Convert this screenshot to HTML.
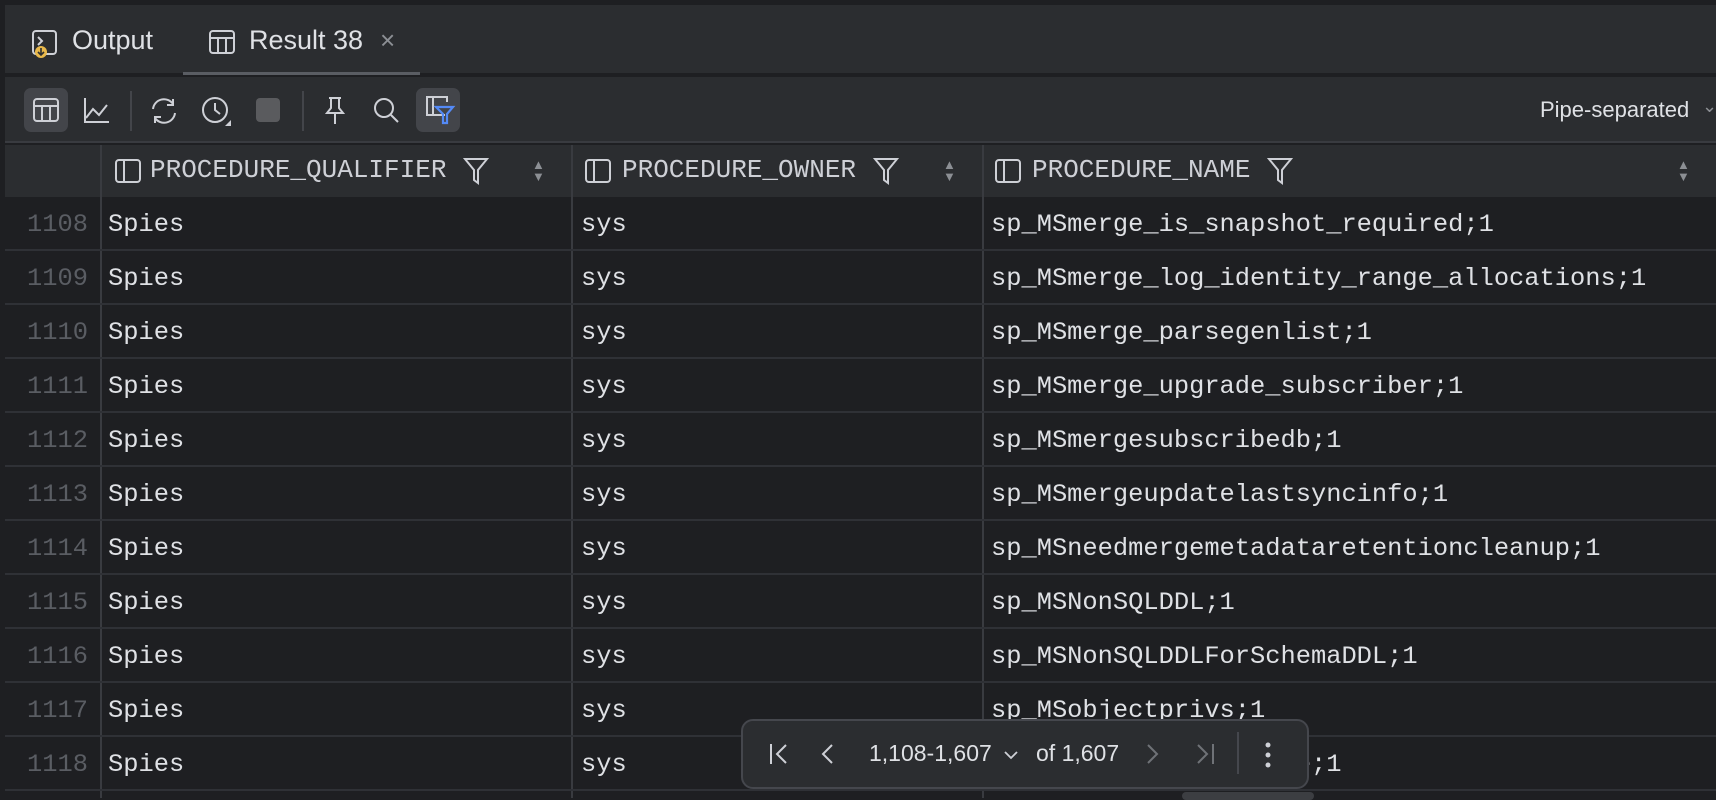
<!DOCTYPE html>
<html><head><meta charset="utf-8"><style>
*{margin:0;padding:0;box-sizing:border-box}
body{width:1716px;height:798px;overflow:hidden;background:#1e1f22;position:relative;font-family:"Liberation Sans",sans-serif;color:#dfe1e5}
.abs{position:absolute}
.mono{font-family:"Liberation Mono",monospace;font-size:25.4px}
.hm{font-family:"Liberation Mono",monospace;font-size:26px}
.row{position:absolute;left:5px;right:0;height:54px;border-bottom:2px solid #2f3136}
.num{position:absolute;left:0;width:83px;text-align:right;color:#5a5d63;top:13px}
.c1{position:absolute;left:103px;top:13px}
.c2{position:absolute;left:576px;top:13px}
.c3{position:absolute;left:986px;top:13px}
.sort{position:absolute;font-size:13px;line-height:12px;color:#8c8f94}
svg{position:absolute}
</style></head><body>
<div class="abs" style="left:0;top:0;width:1716px;height:5px;background:#1e1f22"></div>
<div class="abs" style="left:0;top:5px;width:5px;height:793px;background:#1e1f22"></div>
<!-- tab bar -->
<div class="abs" style="left:5px;top:5px;right:0;height:70px;background:#2b2d30;border-bottom:2px solid #1e1f22"></div>
<div class="abs" style="left:183px;top:72px;width:237px;height:3px;background:#5a5d63"></div>
<svg style="left:32px;top:30px" width="28" height="32" viewBox="0 0 28 32"><rect x="1" y="1" width="23" height="23" rx="3" fill="none" stroke="#ced0d6" stroke-width="2"/><path d="M6 7l4 4-4 4" stroke="#ced0d6" stroke-width="2" fill="none"/><circle cx="9" cy="22" r="6" fill="#e8b84b"/><path d="M9 18v7M6 22l3 3 3-3" stroke="#2b2d30" stroke-width="1.6" fill="none"/></svg>
<div class="abs" style="left:72px;top:25px;font-size:27px">Output</div>
<svg style="left:209px;top:30px" width="26" height="24"><rect x="1" y="1" width="24" height="22" rx="3" fill="none" stroke="#ced0d6" stroke-width="2"/><path d="M1 8h24M9 8v15M17 8v15" stroke="#ced0d6" stroke-width="2"/></svg>
<div class="abs" style="left:249px;top:25px;font-size:27px">Result 38</div>
<div class="abs" style="left:380px;top:25px;font-size:26px;color:#8c8f94">×</div>
<!-- toolbar -->
<div class="abs" style="left:5px;top:77px;right:0;height:66px;background:#2b2d30;border-bottom:2px solid #393b40"></div>
<div class="abs" style="left:24px;top:88px;width:44px;height:44px;border-radius:7px;background:#43454a"></div>
<svg style="left:33px;top:98px" width="26" height="24"><rect x="1" y="1" width="24" height="22" rx="3" fill="none" stroke="#ced0d6" stroke-width="2"/><path d="M1 8h24M9 8v15M17 8v15" stroke="#ced0d6" stroke-width="2"/></svg>
<svg style="left:83px;top:96px" width="28" height="28"><path d="M2 2v24h24M3 22l7-9 6 6 8-10" fill="none" stroke="#ced0d6" stroke-width="2"/></svg>
<div class="abs" style="left:130px;top:91px;width:2px;height:40px;background:#43454a"></div>
<svg style="left:149px;top:96px" width="30" height="30"><path d="M4 13a11 11 0 0 1 20-5M26 17a11 11 0 0 1-20 5M24 3v6h-6M6 27v-6h6" fill="none" stroke="#ced0d6" stroke-width="2"/></svg>
<svg style="left:201px;top:95px" width="32" height="32"><circle cx="14" cy="15" r="12" fill="none" stroke="#ced0d6" stroke-width="2"/><path d="M14 8v7l5 4" fill="none" stroke="#ced0d6" stroke-width="2"/><path d="M30 25v6h-6z" fill="#ced0d6"/></svg>
<div class="abs" style="left:256px;top:98px;width:24px;height:24px;border-radius:4px;background:#5a5b5e"></div>
<div class="abs" style="left:302px;top:91px;width:2px;height:40px;background:#43454a"></div>
<svg style="left:322px;top:96px" width="26" height="30"><path d="M7 2h12M9 2v10l-4 5h16l-4-5V2M13 17v11" fill="none" stroke="#ced0d6" stroke-width="2"/></svg>
<svg style="left:372px;top:96px" width="30" height="30"><circle cx="12" cy="12" r="9" fill="none" stroke="#ced0d6" stroke-width="2"/><path d="M19 19l7 7" stroke="#ced0d6" stroke-width="2"/></svg>
<div class="abs" style="left:416px;top:88px;width:44px;height:44px;border-radius:7px;background:#43454a"></div>
<svg style="left:423px;top:95px" width="34" height="32"><path d="M22 20H4V2h20v5M10 2v18" fill="none" stroke="#ced0d6" stroke-width="2"/><path d="M13 12h17l-6 7v9h-4v-9z" fill="none" stroke="#548af7" stroke-width="2.2"/></svg>
<div class="abs" style="left:1540px;top:97px;font-size:22px">Pipe-separated</div>
<div class="abs" style="left:1702px;top:96px;font-size:18px;color:#8c8f94">⌄</div>
<!-- header -->
<div class="abs" style="left:5px;top:145px;right:0;height:52px;background:#2b2d30"></div>
<div class="abs" style="left:100px;top:145px;width:2px;height:653px;background:#393b40"></div>
<div class="abs" style="left:571px;top:145px;width:2px;height:653px;background:#393b40"></div>
<div class="abs" style="left:982px;top:145px;width:2px;height:653px;background:#393b40"></div>
<svg style="left:115px;top:159px" width="26" height="24"><rect x="1" y="1" width="24" height="22" rx="3" fill="none" stroke="#ced0d6" stroke-width="2"/><path d="M9 1v22" stroke="#ced0d6" stroke-width="2"/></svg>
<div class="abs hm" style="left:150px;top:155px;color:#ced0d6">PROCEDURE_QUALIFIER</div>
<svg style="left:463px;top:157px" width="26" height="28"><path d="M2 2h22l-9 11v13l-4-3V13z" fill="none" stroke="#ced0d6" stroke-width="2"/></svg>
<div class="sort" style="left:532px;top:159px">▲<br>▼</div>
<svg style="left:585px;top:159px" width="26" height="24"><rect x="1" y="1" width="24" height="22" rx="3" fill="none" stroke="#ced0d6" stroke-width="2"/><path d="M9 1v22" stroke="#ced0d6" stroke-width="2"/></svg>
<div class="abs hm" style="left:622px;top:155px;color:#ced0d6">PROCEDURE_OWNER</div>
<svg style="left:873px;top:157px" width="26" height="28"><path d="M2 2h22l-9 11v13l-4-3V13z" fill="none" stroke="#ced0d6" stroke-width="2"/></svg>
<div class="sort" style="left:943px;top:159px">▲<br>▼</div>
<svg style="left:995px;top:159px" width="26" height="24"><rect x="1" y="1" width="24" height="22" rx="3" fill="none" stroke="#ced0d6" stroke-width="2"/><path d="M9 1v22" stroke="#ced0d6" stroke-width="2"/></svg>
<div class="abs hm" style="left:1032px;top:155px;color:#ced0d6">PROCEDURE_NAME</div>
<svg style="left:1267px;top:157px" width="26" height="28"><path d="M2 2h22l-9 11v13l-4-3V13z" fill="none" stroke="#ced0d6" stroke-width="2"/></svg>
<div class="sort" style="left:1677px;top:159px">▲<br>▼</div>
<!-- rows -->
<div class="mono">
<div class="row" style="top:197px"><span class="num">1108</span><span class="c1">Spies</span><span class="c2">sys</span><span class="c3">sp_MSmerge_is_snapshot_required;1</span></div>
<div class="row" style="top:251px"><span class="num">1109</span><span class="c1">Spies</span><span class="c2">sys</span><span class="c3">sp_MSmerge_log_identity_range_allocations;1</span></div>
<div class="row" style="top:305px"><span class="num">1110</span><span class="c1">Spies</span><span class="c2">sys</span><span class="c3">sp_MSmerge_parsegenlist;1</span></div>
<div class="row" style="top:359px"><span class="num">1111</span><span class="c1">Spies</span><span class="c2">sys</span><span class="c3">sp_MSmerge_upgrade_subscriber;1</span></div>
<div class="row" style="top:413px"><span class="num">1112</span><span class="c1">Spies</span><span class="c2">sys</span><span class="c3">sp_MSmergesubscribedb;1</span></div>
<div class="row" style="top:467px"><span class="num">1113</span><span class="c1">Spies</span><span class="c2">sys</span><span class="c3">sp_MSmergeupdatelastsyncinfo;1</span></div>
<div class="row" style="top:521px"><span class="num">1114</span><span class="c1">Spies</span><span class="c2">sys</span><span class="c3">sp_MSneedmergemetadataretentioncleanup;1</span></div>
<div class="row" style="top:575px"><span class="num">1115</span><span class="c1">Spies</span><span class="c2">sys</span><span class="c3">sp_MSNonSQLDDL;1</span></div>
<div class="row" style="top:629px"><span class="num">1116</span><span class="c1">Spies</span><span class="c2">sys</span><span class="c3">sp_MSNonSQLDDLForSchemaDDL;1</span></div>
<div class="row" style="top:683px"><span class="num">1117</span><span class="c1">Spies</span><span class="c2">sys</span><span class="c3">sp_MSobjectprivs;1</span></div>
<div class="row" style="top:737px"><span class="num">1118</span><span class="c1">Spies</span><span class="c2">sys</span><span class="c3">sp_MSobjectprivs_base;1</span></div>
</div>
<div class="abs" style="left:1182px;top:792px;width:132px;height:8px;border-radius:4px;background:#3c3e42"></div>
<!-- popup -->
<div class="abs" style="left:741px;top:719px;width:568px;height:70px;border-radius:12px;background:#2b2d30;border:2px solid #45474d"></div>
<svg style="left:768px;top:742px" width="22" height="24"><path d="M3 2v20M18 3l-9 9 9 9" fill="none" stroke="#ced0d6" stroke-width="2"/></svg>
<svg style="left:820px;top:742px" width="16" height="24"><path d="M12 3l-9 9 9 9" fill="none" stroke="#ced0d6" stroke-width="2"/></svg>
<div class="abs" style="left:869px;top:740px;font-size:23px">1,108-1,607</div>
<svg style="left:1003px;top:750px" width="16" height="10"><path d="M2 2l6 6 6-6" fill="none" stroke="#ced0d6" stroke-width="1.8"/></svg>
<div class="abs" style="left:1036px;top:740px;font-size:23px">of 1,607</div>
<svg style="left:1144px;top:742px" width="16" height="24"><path d="M4 3l9 9-9 9" fill="none" stroke="#6f7277" stroke-width="2"/></svg>
<svg style="left:1194px;top:742px" width="22" height="24"><path d="M4 3l9 9-9 9M19 2v20" fill="none" stroke="#6f7277" stroke-width="2"/></svg>
<div class="abs" style="left:1237px;top:732px;width:2px;height:42px;background:#45474d"></div>
<svg style="left:1264px;top:740px" width="8" height="30"><circle cx="4" cy="5" r="2.5" fill="#ced0d6"/><circle cx="4" cy="15" r="2.5" fill="#ced0d6"/><circle cx="4" cy="25" r="2.5" fill="#ced0d6"/></svg>
</body></html>
